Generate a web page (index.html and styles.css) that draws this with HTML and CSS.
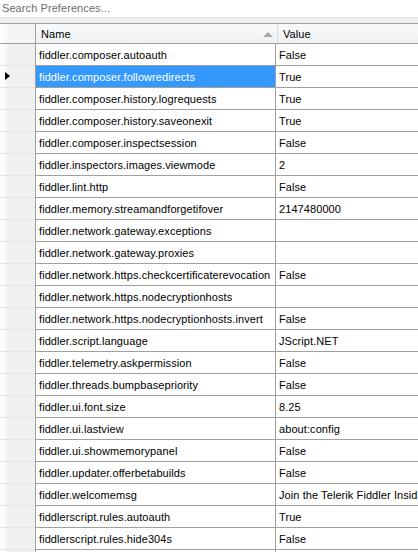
FILE: index.html
```html
<!DOCTYPE html>
<html>
<head>
<meta charset="utf-8">
<title>Preferences</title>
<link rel="stylesheet" href="styles.css">
</head>
<body>
<div class="panel">
  <div class="search">Search Preferences...</div>
  <div class="spacer"></div>
  <div class="grid">
    <div class="row head">
      <div class="gut"></div>
      <div class="cell name">Name<span class="sort"></span></div>
      <div class="cell value">Value</div>
    </div>
    <div class="row"><div class="gut"></div><div class="cell name">fiddler.composer.autoauth</div><div class="cell value">False</div></div>
    <div class="row sel"><div class="gut"><span class="cur"></span></div><div class="cell name">fiddler.composer.followredirects</div><div class="cell value">True</div></div>
    <div class="row"><div class="gut"></div><div class="cell name">fiddler.composer.history.logrequests</div><div class="cell value">True</div></div>
    <div class="row"><div class="gut"></div><div class="cell name">fiddler.composer.history.saveonexit</div><div class="cell value">True</div></div>
    <div class="row"><div class="gut"></div><div class="cell name">fiddler.composer.inspectsession</div><div class="cell value">False</div></div>
    <div class="row"><div class="gut"></div><div class="cell name">fiddler.inspectors.images.viewmode</div><div class="cell value">2</div></div>
    <div class="row"><div class="gut"></div><div class="cell name">fiddler.lint.http</div><div class="cell value">False</div></div>
    <div class="row"><div class="gut"></div><div class="cell name">fiddler.memory.streamandforgetifover</div><div class="cell value">2147480000</div></div>
    <div class="row"><div class="gut"></div><div class="cell name">fiddler.network.gateway.exceptions</div><div class="cell value"></div></div>
    <div class="row"><div class="gut"></div><div class="cell name">fiddler.network.gateway.proxies</div><div class="cell value"></div></div>
    <div class="row"><div class="gut"></div><div class="cell name">fiddler.network.https.checkcertificaterevocation</div><div class="cell value">False</div></div>
    <div class="row"><div class="gut"></div><div class="cell name">fiddler.network.https.nodecryptionhosts</div><div class="cell value"></div></div>
    <div class="row"><div class="gut"></div><div class="cell name">fiddler.network.https.nodecryptionhosts.invert</div><div class="cell value">False</div></div>
    <div class="row"><div class="gut"></div><div class="cell name">fiddler.script.language</div><div class="cell value">JScript.NET</div></div>
    <div class="row"><div class="gut"></div><div class="cell name">fiddler.telemetry.askpermission</div><div class="cell value">False</div></div>
    <div class="row"><div class="gut"></div><div class="cell name">fiddler.threads.bumpbasepriority</div><div class="cell value">False</div></div>
    <div class="row"><div class="gut"></div><div class="cell name">fiddler.ui.font.size</div><div class="cell value">8.25</div></div>
    <div class="row"><div class="gut"></div><div class="cell name">fiddler.ui.lastview</div><div class="cell value">about:config</div></div>
    <div class="row"><div class="gut"></div><div class="cell name">fiddler.ui.showmemorypanel</div><div class="cell value">False</div></div>
    <div class="row"><div class="gut"></div><div class="cell name">fiddler.updater.offerbetabuilds</div><div class="cell value">False</div></div>
    <div class="row"><div class="gut"></div><div class="cell name">fiddler.welcomemsg</div><div class="cell value">Join the Telerik Fiddler Insiders Program</div></div>
    <div class="row"><div class="gut"></div><div class="cell name">fiddlerscript.rules.autoauth</div><div class="cell value">True</div></div>
    <div class="row"><div class="gut"></div><div class="cell name">fiddlerscript.rules.hide304s</div><div class="cell value">False</div></div>
    <div class="row"><div class="gut"></div><div class="cell name"></div><div class="cell value"></div></div>
  </div>
</div>
</body>
</html>
```
FILE: styles.css
```css
html, body {
  margin: 0;
  padding: 0;
  background: #ffffff;
}

.panel {
  width: 418px;
  height: 552px;
  overflow: hidden;
  font-family: "Liberation Sans", Arial, sans-serif;
  font-size: 11px;
  letter-spacing: 0.08px;
  color: #000;
}

.search {
  height: 17px;
  line-height: 17px;
  padding-left: 2px;
  color: #6d6d6d;
  background: #fff;
  white-space: nowrap;
}

.spacer {
  height: 5px;
  background: #f0f0f0;
  border-top: 1px solid #e6e6e6;
}

.grid {
  border-top: 1px solid #a0a0a0;
}

.row {
  display: flex;
  height: 21px;
  border-bottom: 1px solid #a0a0a0;
}

.gut {
  flex: 0 0 35px;
  border-right: 1px solid #a0a0a0;
  background: linear-gradient(to right, #ffffff 0, #fafafa 5px, #f0f0f0 8px, #f0f0f0 100%);
  box-shadow: inset 0 -1px 0 #e4e4e4;
  margin-bottom: -1px;
  position: relative;
}

.cell {
  line-height: 22px;
  padding-left: 3px;
  white-space: nowrap;
  overflow: hidden;
}

.name {
  flex: 0 0 236px;
  border-right: 1px solid #a0a0a0;
  position: relative;
}

.value {
  flex: 1 1 auto;
}

.head {
  height: 19px;
  background: linear-gradient(to bottom, #f8f9fa, #f0f1f2);
}

.head .gut {
  background: linear-gradient(to right, #ffffff, #f3f4f5 10px);
  box-shadow: none;
  margin-bottom: 0;
}

.head .cell {
  line-height: 20px;
  padding-left: 5px;
}

.head .name {
  border-right: 1px solid #dcdcdc;
}

.sort {
  position: absolute;
  right: 4px;
  top: 8px;
  width: 0;
  height: 0;
  border-left: 5px solid transparent;
  border-right: 5px solid transparent;
  border-bottom: 5px solid #a8a8a8;
}

.sel .name {
  background: #3399ff;
  color: #fff;
}

.cur {
  position: absolute;
  left: 5px;
  top: 6px;
  width: 0;
  height: 0;
  border-top: 4px solid transparent;
  border-bottom: 4px solid transparent;
  border-left: 5px solid #000;
}
```
